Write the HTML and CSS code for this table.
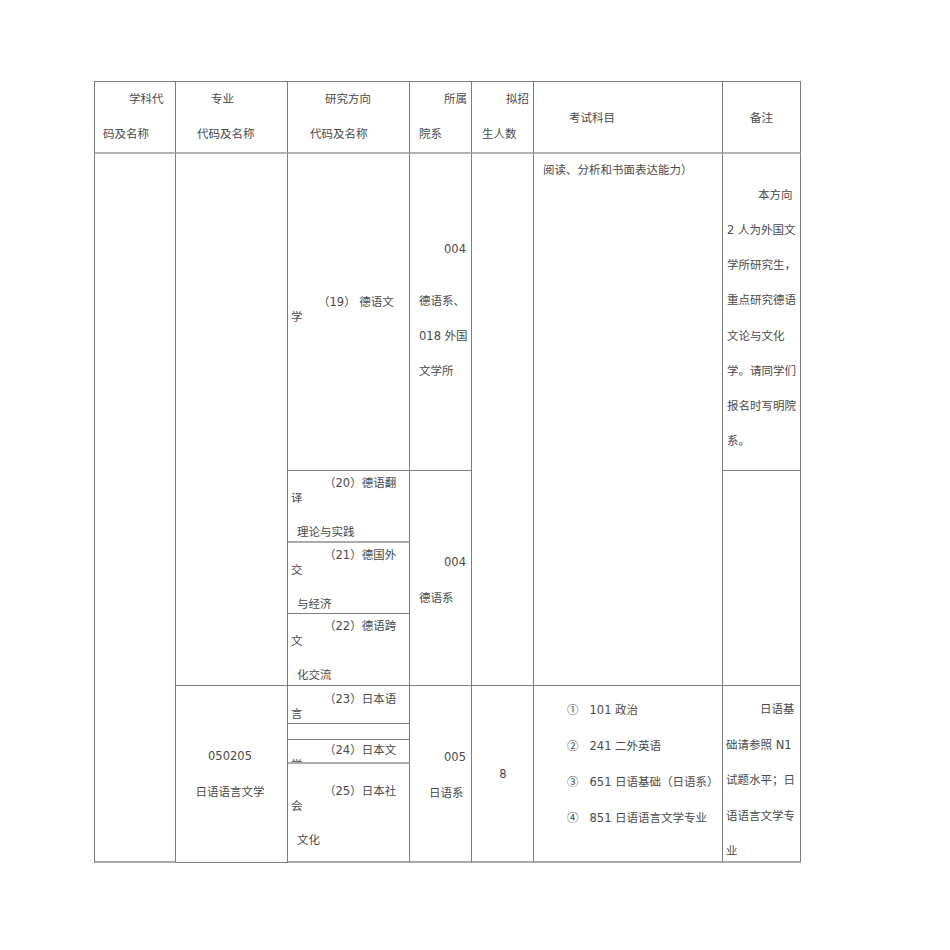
FILE: index.html
```html
<!DOCTYPE html>
<html lang="zh-CN">
<head>
<meta charset="utf-8">
<title>招生专业目录</title>
<link rel="stylesheet" href="styles.css">
</head>
<body>
<div class="page">
  <div class="sheet">
    <div class="cell col-1 row-head"><p class="head h-subject">学科代<br>码及名称</p></div>
    <div class="cell col-2 row-head"><p class="head h-major">专业<br>代码及名称</p></div>
    <div class="cell col-3 row-head"><p class="head h-dir">研究方向<br>代码及名称</p></div>
    <div class="cell col-4 row-head"><p class="head h-dept">所属<br>院系</p></div>
    <div class="cell col-5 row-head"><p class="head h-quota">拟招<br>生人数</p></div>
    <div class="cell col-6 row-head mid"><p class="h-exam">考试科目</p></div>
    <div class="cell col-7 row-head mid"><p class="h-note">备注</p></div>

    <div class="cell col-1 span-all"></div>
    <div class="cell col-2 span-de"></div>

    <div class="cell col-3 row-19 dir dir-19">
      <p class="dir-title first">（19） 德语文<br>学</p>
    </div>
    <div class="cell col-4 row-19 dept dept-a">
      <p class="code gap">004</p>
      <p class="line">德语系、<br>018 外国<br>文学所</p>
    </div>
    <div class="cell col-5 span-de"></div>
    <div class="cell col-6 span-de exam-de">
      <p>阅读、分析和书面表达能力）</p>
    </div>
    <div class="cell col-7 row-19 note note-de">
      <p>本方向<br>2 人为外国文<br>学所研究生，<br>重点研究德语<br>文论与文化<br>学。请同学们<br>报名时写明院<br>系。</p>
    </div>

    <div class="cell col-3 row-20 dir soft">
      <p class="dir-title">（20）德语翻<br>译</p>
      <p class="cont">理论与实践</p>
    </div>
    <div class="cell col-4 span-de-rest dept dept-b">
      <p class="code">004</p>
      <p class="line">德语系</p>
    </div>
    <div class="cell col-7 span-de-rest"></div>
    <div class="cell col-3 row-21 dir">
      <p class="dir-title">（21）德国外<br>交</p>
      <p class="cont">与经济</p>
    </div>
    <div class="cell col-3 row-22 dir">
      <p class="dir-title">（22）德语跨<br>文</p>
      <p class="cont">化交流</p>
    </div>

    <div class="cell col-2 span-jp major-jp">
      <p>050205</p>
      <p>日语语言文学</p>
    </div>
    <div class="cell col-3 row-23 dir dir-23">
      <p class="dir-title">（23）日本语<br>言</p>
    </div>
    <div class="cell col-3 row-gap"></div>
    <div class="cell col-3 row-24 dir dir-24 soft">
      <p class="dir-title">（24）日本文<br>学</p>
    </div>
    <div class="cell col-3 row-25 dir dir-25 soft">
      <p class="dir-title">（25）日本社<br>会</p>
      <p class="cont">文化</p>
    </div>
    <div class="cell col-4 span-jp dept dept-c soft">
      <p class="code">005</p>
      <p class="line jp">日语系</p>
    </div>
    <div class="cell col-5 span-jp quota soft">
      <p>8</p>
    </div>
    <div class="cell col-6 span-jp exam-jp soft">
      <p><span class="mark">①</span>101 政治</p>
      <p><span class="mark">②</span>241 二外英语</p>
      <p><span class="mark">③</span>651 日语基础（日语系）</p>
      <p><span class="mark">④</span>851 日语语言文学专业</p>
    </div>
    <div class="cell col-7 span-jp note note-jp soft">
      <p>日语基<br>础请参照 N1<br>试题水平；日<br>语语言文学专<br>业</p>
    </div>
  </div>
</div>
</body>
</html>
```

FILE: styles.css
```css
* {
  box-sizing: border-box;
}

html,
body {
  margin: 0;
  background: #ffffff;
}

body {
  font-family: "DejaVu Sans", "Noto Sans CJK SC", sans-serif;
  font-size: 11.5px;
  color: #4a4a4a;
}

p {
  margin: 0;
}

.page {
  padding: 81px 0 0 94px;
}

.sheet {
  display: grid;
  grid-template-columns: 81px 112px 122px 62px 62px 189px 78px;
  grid-template-rows: 72px 317px 72px 71px 72px 38px 16px 24px 99px;
  width: 707px;
  border-top: 1px solid #7d7d7d;
  border-left: 1px solid #7d7d7d;
}

.cell {
  border-right: 1px solid #7d7d7d;
  border-bottom: 1px solid #7d7d7d;
  overflow: hidden;
  white-space: nowrap;
}

.soft {
  border-bottom: 2px solid #ababab;
}

/* grid placement */
.col-1 { grid-column: 1; }
.col-2 { grid-column: 2; }
.col-3 { grid-column: 3; }
.col-4 { grid-column: 4; }
.col-5 { grid-column: 5; }
.col-6 { grid-column: 6; }
.col-7 { grid-column: 7; }

.row-head { grid-row: 1; border-bottom: 2px solid #b3b3b3; }
.row-19 { grid-row: 2; }
.row-20 { grid-row: 3; }
.row-21 { grid-row: 4; }
.row-22 { grid-row: 5; }
.row-23 { grid-row: 6; }
.row-gap { grid-row: 7; }
.row-24 { grid-row: 8; }
.row-25 { grid-row: 9; }
.span-all { grid-row: 2 / 10; border-bottom: 2px solid #ababab; }
.span-de { grid-row: 2 / 6; }
.span-de-rest { grid-row: 3 / 6; }
.span-jp { grid-row: 6 / 10; }

/* header */
.head {
  line-height: 35px;
}

.h-subject { padding-left: 8px; text-indent: 26px; }
.h-major { padding-left: 21px; text-indent: 14px; }
.h-dir { padding-left: 22px; text-indent: 15px; }
.h-dept { padding-left: 9px; text-indent: 25px; }
.h-quota { padding-left: 10px; text-indent: 24px; }

.mid {
  display: flex;
  align-items: center;
}

.h-exam { padding-left: 35px; }
.h-note { padding-left: 27px; }

/* research direction cells */
.dir {
  padding: 5px 0 0 3px;
  line-height: 15px;
}

.dir-title {
  text-indent: 33px;
}

.dir-title.first {
  text-indent: 27px;
}

.dir-19 { padding-top: 141px; }
.dir-23 { padding-top: 6px; }
.dir-24 { padding-top: 3px; }
.dir-25 { padding-top: 20px; }

.cont {
  margin-top: 19px;
  padding-left: 6px;
}

/* department cells */
.dept {
  display: flex;
  flex-direction: column;
  justify-content: center;
}

.dept .code {
  line-height: 36px;
  text-align: right;
  padding-right: 5px;
}

.dept .line {
  line-height: 35px;
  padding-left: 9px;
}

.dept .line.jp {
  padding-left: 19px;
  line-height: 36px;
}

.dept-a {
  padding-bottom: 3px;
}

.dept-a .code {
  line-height: 35px;
  margin-bottom: 17px;
}

.dept-b {
  padding-top: 3px;
}

.dept-b .line {
  line-height: 36px;
}

.dept-c {
  padding-top: 2px;
}

/* exam subjects */
.exam-de {
  padding-left: 9px;
  line-height: 32px;
}

.exam-jp {
  padding: 5px 0 0 33px;
  line-height: 36px;
}

.exam-jp p {
  height: 36px;
}

.mark {
  font-family: "Noto Sans CJK SC", sans-serif;
  margin-right: 11px;
}

/* major */
.major-jp {
  display: flex;
  flex-direction: column;
  justify-content: center;
  text-align: center;
  line-height: 36px;
  padding-right: 3px;
}

.quota {
  display: flex;
  align-items: center;
  justify-content: center;
  padding-left: 1px;
}

/* notes */
.note-de {
  padding: 23.5px 0 0 4px;
  line-height: 35.25px;
}

.note-de p {
  text-indent: 31px;
}

.note-jp {
  padding: 6px 0 0 3px;
  line-height: 35.5px;
}

.note-jp p {
  text-indent: 34px;
}
```
